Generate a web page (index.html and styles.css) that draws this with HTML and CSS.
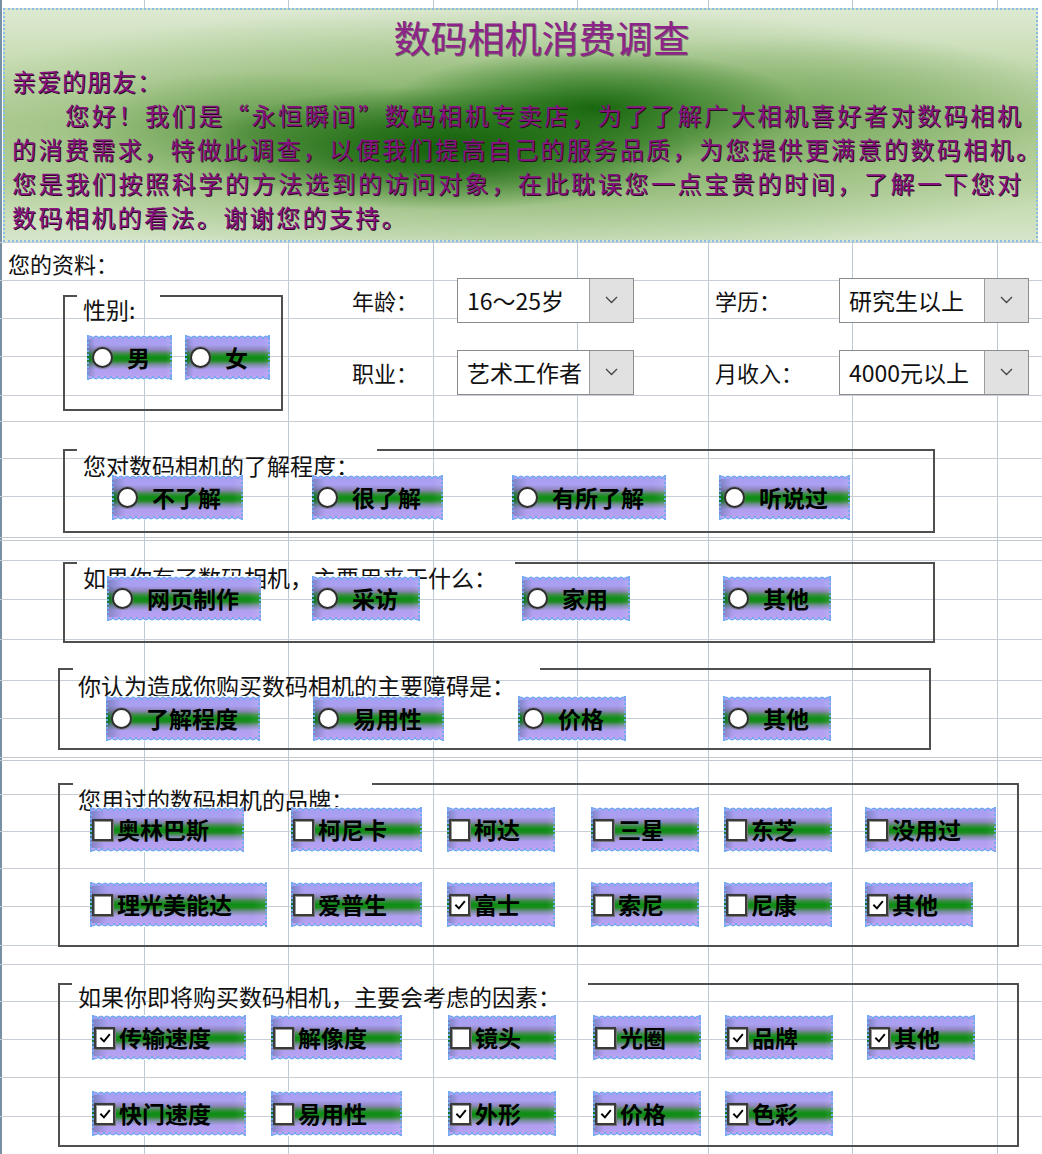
FILE: index.html
```html
<!DOCTYPE html>
<html lang="zh-CN">
<head>
<meta charset="utf-8">
<title>数码相机消费调查</title>
<link rel="stylesheet" href="styles.css">
</head>
<body>
<div class="sheet">
  <div class="grid">
    <div></div><div></div><div></div><div></div><div></div><div></div><div></div><div></div>
    <div class="dbl"></div><div></div><div></div><div></div><div></div><div></div>
    <div class="dbl"></div><div></div><div></div><div></div><div></div><div></div><div></div>
    <div></div><div></div><div></div><div></div><div></div>
  </div>

  <div class="layer">
    <div class="header">
      <h1 class="title">数码相机消费调查</h1>
      <p class="line l1">亲爱的朋友：</p>
      <p class="line just l2">您好！我们是“永恒瞬间”数码相机专卖店，为了了解广大相机喜好者对数码相机</p>
      <p class="line just l3">的消费需求，特做此调查，以便我们提高自己的服务品质，为您提供更满意的数码相机。</p>
      <p class="line just l4">您是我们按照科学的方法选到的访问对象，在此耽误您一点宝贵的时间，了解一下您对</p>
      <p class="line l5">数码相机的看法。谢谢您的支持。</p>
    </div>

    <div class="info-title">您的资料：</div>

    <div class="info">
      <div class="group g-sex">
        <div class="legend">性别:</div>
        <div class="sex-opts">
          <span class="opt radio"><i class="dot"></i>男</span>
          <span class="opt radio"><i class="dot"></i>女</span>
        </div>
      </div>

      <div class="combos">
        <span class="lbl">年龄：</span>
        <div class="combo c-age"><span class="val">16～25岁</span><span class="btn"><svg width="13" height="8" viewBox="0 0 13 8"><polyline points="1,1 6.5,6.5 12,1" fill="none" stroke="#444" stroke-width="1.3"/></svg></span></div>
        <span class="lbl">学历：</span>
        <div class="combo c-wide"><span class="val">研究生以上</span><span class="btn"><svg width="13" height="8" viewBox="0 0 13 8"><polyline points="1,1 6.5,6.5 12,1" fill="none" stroke="#444" stroke-width="1.3"/></svg></span></div>
        <span class="lbl">职业：</span>
        <div class="combo c-age"><span class="val">艺术工作者</span><span class="btn"><svg width="13" height="8" viewBox="0 0 13 8"><polyline points="1,1 6.5,6.5 12,1" fill="none" stroke="#444" stroke-width="1.3"/></svg></span></div>
        <span class="lbl">月收入：</span>
        <div class="combo c-wide"><span class="val">4000元以上</span><span class="btn"><svg width="13" height="8" viewBox="0 0 13 8"><polyline points="1,1 6.5,6.5 12,1" fill="none" stroke="#444" stroke-width="1.3"/></svg></span></div>
      </div>
    </div>

    <div class="group g-know">
      <div class="legend">您对数码相机的了解程度：</div>
      <div class="opts">
        <span class="opt radio"><i class="dot"></i>不了解</span>
        <span class="opt radio"><i class="dot"></i>很了解</span>
        <span class="opt radio"><i class="dot"></i>有所了解</span>
        <span class="opt radio"><i class="dot"></i>听说过</span>
      </div>
    </div>

    <div class="group g-use">
      <div class="legend">如果你有了数码相机，主要用来干什么：</div>
      <div class="opts">
        <span class="opt radio"><i class="dot"></i>网页制作</span>
        <span class="opt radio"><i class="dot"></i>采访</span>
        <span class="opt radio"><i class="dot"></i>家用</span>
        <span class="opt radio"><i class="dot"></i>其他</span>
      </div>
    </div>

    <div class="group g-obs">
      <div class="legend">你认为造成你购买数码相机的主要障碍是：</div>
      <div class="opts">
        <span class="opt radio"><i class="dot"></i>了解程度</span>
        <span class="opt radio"><i class="dot"></i>易用性</span>
        <span class="opt radio"><i class="dot"></i>价格</span>
        <span class="opt radio"><i class="dot"></i>其他</span>
      </div>
    </div>

    <div class="group g-brand">
      <div class="legend">您用过的数码相机的品牌：</div>
      <div class="opts">
        <span class="opt check"><i class="box"></i>奥林巴斯</span>
        <span class="opt check"><i class="box"></i>柯尼卡</span>
        <span class="opt check"><i class="box"></i>柯达</span>
        <span class="opt check"><i class="box"></i>三星</span>
        <span class="opt check"><i class="box"></i>东芝</span>
        <span class="opt check"><i class="box"></i>没用过</span>
        <span class="opt check"><i class="box"></i>理光美能达</span>
        <span class="opt check"><i class="box"></i>爱普生</span>
        <span class="opt check"><i class="box"><svg viewBox="0 0 16 16"><path d="M3.5 8.5 L6.8 11.8 L12.8 4.5"/></svg></i>富士</span>
        <span class="opt check"><i class="box"></i>索尼</span>
        <span class="opt check"><i class="box"></i>尼康</span>
        <span class="opt check"><i class="box"><svg viewBox="0 0 16 16"><path d="M3.5 8.5 L6.8 11.8 L12.8 4.5"/></svg></i>其他</span>
      </div>
    </div>

    <div class="group g-factor">
      <div class="legend">如果你即将购买数码相机，主要会考虑的因素：</div>
      <div class="opts">
        <span class="opt check"><i class="box"><svg viewBox="0 0 16 16"><path d="M3.5 8.5 L6.8 11.8 L12.8 4.5"/></svg></i>传输速度</span>
        <span class="opt check"><i class="box"></i>解像度</span>
        <span class="opt check"><i class="box"></i>镜头</span>
        <span class="opt check"><i class="box"></i>光圈</span>
        <span class="opt check"><i class="box"><svg viewBox="0 0 16 16"><path d="M3.5 8.5 L6.8 11.8 L12.8 4.5"/></svg></i>品牌</span>
        <span class="opt check"><i class="box"><svg viewBox="0 0 16 16"><path d="M3.5 8.5 L6.8 11.8 L12.8 4.5"/></svg></i>其他</span>
        <span class="opt check"><i class="box"><svg viewBox="0 0 16 16"><path d="M3.5 8.5 L6.8 11.8 L12.8 4.5"/></svg></i>快门速度</span>
        <span class="opt check"><i class="box"></i>易用性</span>
        <span class="opt check"><i class="box"><svg viewBox="0 0 16 16"><path d="M3.5 8.5 L6.8 11.8 L12.8 4.5"/></svg></i>外形</span>
        <span class="opt check"><i class="box"><svg viewBox="0 0 16 16"><path d="M3.5 8.5 L6.8 11.8 L12.8 4.5"/></svg></i>价格</span>
        <span class="opt check"><i class="box"><svg viewBox="0 0 16 16"><path d="M3.5 8.5 L6.8 11.8 L12.8 4.5"/></svg></i>色彩</span>
      </div>
    </div>
  </div>
</div>
</body>
</html>
```

FILE: styles.css
```css
* { box-sizing: border-box; }

html, body {
  margin: 0;
  padding: 0;
  background: #fff;
}

body {
  font-family: "Noto Sans CJK SC", "Noto Sans", sans-serif;
  color: #111;
}

.sheet {
  position: relative;
  width: 1042px;
  height: 1154px;
  overflow: hidden;
}

/* ---------- spreadsheet grid ---------- */
.grid {
  display: grid;
  grid-template-rows: 243px 38px 38px 38px 39px 26px 37px 38px 44px 20px 39px 40px 41px 38px 42px 34px 37px 37px 38px 39px 19px 37px 38px 38px 39px 38px;
  height: 1154px;
  background:
    linear-gradient(#bccad6, #bccad6) 144px 0 / 1px 100% no-repeat,
    linear-gradient(#bccad6, #bccad6) 288px 0 / 1px 100% no-repeat,
    linear-gradient(#bccad6, #bccad6) 433px 0 / 1px 100% no-repeat,
    linear-gradient(#bccad6, #bccad6) 577px 0 / 1px 100% no-repeat,
    linear-gradient(#bccad6, #bccad6) 708px 0 / 1px 100% no-repeat,
    linear-gradient(#bccad6, #bccad6) 852px 0 / 1px 100% no-repeat,
    linear-gradient(#bccad6, #bccad6) 997px 0 / 1px 100% no-repeat,
    #fff;
  box-shadow: inset 2px 0 0 #7890a3;
}

.grid > div {
  border-bottom: 1px solid #c8ced5;
}

.grid > .dbl {
  border-bottom: 4px double #c2c8cf;
}

/* ---------- floating layer ---------- */
.layer {
  position: absolute;
  inset: 0;
  padding-top: 8px;
}

/* ---------- header text box ---------- */
.header {
  margin-left: 3px;
  width: 1035px;
  height: 234px;
  border: 2px dotted #8bbce7;
  padding: 0 0 0 7px;
  background:
    radial-gradient(ellipse 250px 62px at 440px 138px, rgba(14, 92, 6, 0.95) 0%, rgba(24, 104, 14, 0.75) 40%, rgba(60, 130, 40, 0) 100%),
    radial-gradient(ellipse 210px 58px at 590px 98px, rgba(16, 98, 8, 0.92) 0%, rgba(34, 114, 22, 0.6) 45%, rgba(60, 130, 40, 0) 100%),
    radial-gradient(ellipse 200px 60px at 260px 120px, rgba(60, 130, 40, 0.55) 0%, rgba(60, 130, 40, 0) 100%),
    radial-gradient(ellipse 300px 70px at 800px 95px, rgba(90, 150, 65, 0.5) 0%, rgba(90, 150, 65, 0) 100%),
    radial-gradient(ellipse 620px 130px at 500px 125px, rgba(80, 145, 55, 0.8) 0%, rgba(120, 170, 90, 0.45) 55%, rgba(150, 190, 120, 0) 100%),
    linear-gradient(180deg, #dde9d2 0%, #c8dcb4 22%, #b4cf9a 50%, #bcd5a5 75%, #d6e5c9 100%);
  overflow: visible;
}

.title {
  margin: 0;
  padding: 5px 0 0 35px;
  font-size: 37px;
  line-height: 44px;
  font-weight: 400;
  text-align: center;
  color: #8c248a;
  text-shadow: 1px 1px 0 rgba(60, 10, 50, 0.55);
}

.line {
  margin: 0;
  font-size: 24px;
  line-height: 34px;
  color: #86137f;
  text-shadow: 1px 1px 0 #2c0a24;
  white-space: nowrap;
}

.l1 { margin-top: 5px; letter-spacing: 1px; }
.l5 { letter-spacing: 2.4px; }

.just {
  text-align: justify;
  text-align-last: justify;
}

.l2 { padding-left: 53px; margin-right: 15px; }
.l3 { margin-right: -4px; }
.l4 { margin-right: 15px; }

/* ---------- personal info ---------- */
.info-title {
  margin: 8px 0 0 8px;
  font-size: 22px;
  line-height: 26px;
}

.info {
  display: flex;
  align-items: flex-start;
  margin-top: 1px;
}

.combos {
  margin-left: 69px;
  display: grid;
  grid-template-columns: 105px 258px 124px 190px;
  grid-template-rows: 46px 46px;
  row-gap: 26px;
  align-items: center;
}

.lbl {
  font-size: 22px;
  line-height: 26px;
}

.combo {
  display: flex;
  height: 45px;
  border: 1px solid #8c8c8c;
  background: #fff;
}

.c-age { width: 177px; }
.c-wide { width: 190px; }

.combo .val {
  flex: 1;
  min-width: 0;
  overflow: hidden;
  white-space: nowrap;
  padding-left: 9px;
  font-size: 23px;
  line-height: 43px;
}

.combo .btn {
  flex: none;
  width: 44px;
  background: #e1e1e1;
  border-left: 1px solid #9d9d9d;
  display: flex;
  align-items: center;
  justify-content: center;
}

/* ---------- group boxes ---------- */
.group {
  display: flow-root;
  border: 2px solid #4f4f4f;
  border-top: 0;
  background:
    linear-gradient(#4f4f4f, #4f4f4f) 0 0 / var(--l) 2px no-repeat,
    linear-gradient(#4f4f4f, #4f4f4f) var(--r) 0 / 100% 2px no-repeat;
}

.legend {
  margin-left: 18px;
  font-size: 23px;
  line-height: 24px;
  white-space: nowrap;
}

.opts {
  display: grid;
}

.opts > .opt { justify-self: start; }

.g-sex {
  margin: 18px 0 0 63px;
  width: 220px;
  height: 116px;
  --l: 12px;
  --r: 95px;
}
.g-sex .legend { margin-top: 2px; }

.sex-opts {
  display: flex;
  gap: 13px;
  margin-top: 14px;
  padding-left: 22px;
}

.g-know {
  margin: 38px 0 0 63px;
  width: 872px;
  height: 84px;
  --l: 12px;
  --r: 312px;
}
.g-know .legend { margin-top: 4px; }
.g-know .opts {
  margin-top: -2px;
  padding-left: 47px;
  grid-template-columns: 200px 200px 207px auto;
}

.g-use {
  margin: 29px 0 0 63px;
  width: 872px;
  height: 81px;
  --l: 12px;
  --r: 450px;
}
.g-use .legend { margin-top: 3px; }
.g-use .opts {
  margin-top: -13px;
  padding-left: 42px;
  grid-template-columns: 205px 210px 201px auto;
}

.g-obs {
  margin: 25px 0 0 58px;
  width: 873px;
  height: 82px;
  --l: 13px;
  --r: 480px;
}
.g-obs .legend { margin-top: 5px; }
.g-obs .opts {
  margin-top: -1px;
  padding-left: 46px;
  grid-template-columns: 207px 205px 205px auto;
}

.g-brand {
  margin: 33px 0 0 58px;
  width: 961px;
  height: 164px;
  --l: 13px;
  --r: 312px;
}
.g-brand .legend { margin-top: 4px; }
.g-brand .opts {
  margin-top: -4px;
  row-gap: 30px;
  padding-left: 30px;
  grid-template-columns: 201px 156px 144px 133px 141px auto;
}

.g-factor {
  margin: 36px 0 0 58px;
  width: 961px;
  height: 164px;
  --l: 12px;
  --r: 528px;
}
.g-factor .legend { margin-top: 1px; }
.g-factor .opts {
  margin-top: 7px;
  row-gap: 31px;
  padding-left: 32px;
  grid-template-columns: 179px 177px 145px 132px 142px auto;
}

/* ---------- option buttons ---------- */
.opt {
  position: relative;
  display: inline-flex;
  align-items: center;
  height: 45px;
  border-left: 2px dotted #72aaf0;
  border-right: 2px dotted #72aaf0;
  font-size: 23px;
  font-weight: 700;
  line-height: 1;
  color: #000;
  white-space: nowrap;
  background:
    radial-gradient(circle at 3px 4px, #a99ff3 2.1px, #6fa9f0 2.6px, #6fa9f0 3.2px, #ffffff 3.7px) left top / 6px 4px repeat-x,
    radial-gradient(circle at 3px 0px, #b9a3f2 2.1px, #6fa9f0 2.6px, #6fa9f0 3.2px, #ffffff 3.7px) left bottom / 6px 4px repeat-x,
    linear-gradient(90deg, rgba(0, 50, 70, 0.28) 0%, rgba(0, 50, 70, 0) 10%, rgba(0, 0, 0, 0) 92%, rgba(255, 255, 255, 0.12) 100%),
    linear-gradient(180deg, #a89ff3 0%, #aa9ff1 22%, #8e86bb 33%, #3d8b46 42%, #0a8f12 50%, #1d8b20 57%, #7c8ea3 66%, #b09ef0 76%, #bba3f2 100%);
  background-origin: border-box;
}

.opt.radio { padding: 0 20px 0 3px; }
.opt.check { padding: 0 33px 0 0; }

.dot {
  flex: none;
  width: 21px;
  height: 21px;
  margin-right: 14px;
  border-radius: 50%;
  border: 2px solid #2e2e2e;
  background: radial-gradient(circle at 45% 40%, #ffffff 60%, #e4e4e4 100%);
  box-shadow: 0 0 0 1px rgba(110, 110, 110, 0.45);
}

.box {
  flex: none;
  width: 21px;
  height: 22px;
  margin-right: 4px;
  background: #fff;
  border: 2px solid #3a3a3a;
  box-shadow: inset 1px 1px 0 #9a9a9a, 1px 1px 0 #777;
  display: flex;
  align-items: center;
  justify-content: center;
}

.box svg {
  width: 14px;
  height: 14px;
}

.box svg path {
  fill: none;
  stroke: #000;
  stroke-width: 2.2;
  stroke-linecap: square;
}
```
